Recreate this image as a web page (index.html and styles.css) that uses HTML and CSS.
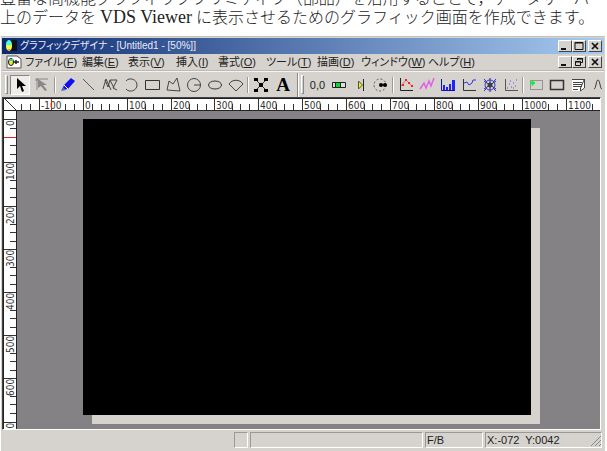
FILE: index.html
```html
<!DOCTYPE html>
<html lang="ja">
<head>
<meta charset="utf-8">
<title>グラフィックデザイナ</title>
<link rel="stylesheet" href="styles.css">
</head>
<body>
<div class="intro">
<p>豊富な高機能グラフィックプリミティブ（部品）を活用することで，データサーバ</p>
<p>上のデータを <span class="latin">VDS Viewer</span> に表示させるためのグラフィック画面を作成できます。</p>
</div>
<main class="window">
<header class="titlebar">
<svg class="app-icon" width="14" height="14" viewBox="0 0 14 14"><path fill="#111" d="M6 1h7v11H6z"/><ellipse cx="5" cy="7" rx="3" ry="5" fill="#ff3"/><path fill="#4fe" d="M2 6a3 5 0 0 1 6 0z"/><path fill="#f84" d="M3 10h4l-2 2z"/></svg>
<h1>グラフィックデザイナ - [Untitled1 - [50%]]</h1>
<div class="controls">
<button aria-label="最小化"><svg width="12" height="10"><path d="M2 8h5" stroke-width="2"/></svg></button><button aria-label="最大化"><svg width="12" height="10"><path d="M2 1.500h8v7h-8zM2 2h8"/></svg></button><button class="close" aria-label="閉じる"><svg width="12" height="10"><path d="M3 2l6 6M9 2l-6 6" stroke-width="1.700"/></svg></button>
</div>
</header>
<nav class="menubar">
<svg class="doc-icon" width="16" height="16" viewBox="0 0 16 16"><path d="M1 2h10l4 3v9H1z" fill="#fff" stroke="#555"/><ellipse cx="5" cy="8" rx="2.500" ry="3.500" fill="#ee3" stroke="#111"/><path d="M3 7h4V5H4z" fill="#3cc"/><path d="M7 8h6M10 6v4" stroke="#222" stroke-width="1.500" fill="none"/></svg>
<div class="menus">
<button>ファイル(<u>F</u>)</button><button>編集(<u>E</u>)</button><button>表示(<u>V</u>)</button><button>挿入(<u>I</u>)</button><button>書式(<u>O</u>)</button><button>ツール(<u>T</u>)</button><button>描画(<u>D</u>)</button><button>ウィンドウ(<u>W</u>)</button><button>ヘルプ(<u>H</u>)</button>
</div>
<div class="controls">
<button aria-label="文書を最小化"><svg width="12" height="10"><path d="M2 8h5" stroke-width="2"/></svg></button><button aria-label="元に戻す"><svg width="12" height="10"><path d="M4.500 3V1.500h5v4H8M4 2h6M2.500 4.500h5v4h-5zM2 5h6"/></svg></button><button class="close" aria-label="文書を閉じる"><svg width="12" height="10"><path d="M3 2l6 6M9 2l-6 6" stroke-width="1.700"/></svg></button>
</div>
</nav>
<div class="toolbar">
<i class="grip"></i>
<div class="tools">
<button class="pressed" aria-label="選択"><svg viewBox="0 0 20 20"><path d="M7 3v11l3-3 2 6 2-1-2-5h4z" fill="#000"/></svg></button>
<button class="wide" aria-label="頂点編集"><svg viewBox="0 0 20 20"><path d="M4 4h12M5 3v12M3 5h4" stroke="#888"/><path d="M6 4v9l3-2 4 5 2-1-4-5h4z" fill="#888"/></svg></button>
<i class="sep"></i>
<button aria-label="ペン"><svg viewBox="0 0 20 20"><path d="M4 15l2-5 7-7 4 3-7 8z" fill="#1111f0"/><path d="M3 16l2-4 3 3z" fill="#46c"/><path d="M6 10l4 4" stroke="#fff"/></svg></button>
<button aria-label="直線"><svg viewBox="0 0 20 20"><path d="M4 4l11 11" stroke="#555"/></svg></button>
<button aria-label="折れ線"><svg viewBox="0 0 20 20"><path d="M3 14L6 4l5 11M5 5l3 7 2-7h7l-4 8 4 2M10 5l4 8" stroke="#444"/></svg></button>
<button aria-label="円弧"><svg viewBox="0 0 20 20"><path d="M5 6c3-4 11-2 11 4s-8 8-11 4" stroke="#444"/></svg></button>
<button aria-label="長方形"><svg viewBox="0 0 20 20"><path d="M3.500 5.500h14v9h-14z" stroke="#333"/></svg></button>
<button aria-label="多角形"><svg viewBox="0 0 20 20"><path d="M4 15L6 6l4 3 4-6 3 13z" stroke="#444"/></svg></button>
<button aria-label="扇形"><svg viewBox="0 0 20 20"><circle cx="10" cy="10" r="6.500" stroke="#444"/><path d="M10 10h7" stroke="#444"/></svg></button>
<button aria-label="楕円"><svg viewBox="0 0 20 20"><ellipse cx="10" cy="10" rx="6.500" ry="4" stroke="#333"/></svg></button>
<button aria-label="弓形"><svg viewBox="0 0 20 20"><path d="M3 9c3-5 11-5 14 0l-7 7z" stroke="#444"/></svg></button>
<i class="sep"></i>
<button aria-label="部品"><svg viewBox="0 0 20 20"><path d="M4 4l12 12M16 4L4 16" stroke="#333"/><path d="M3 3h4v3H3zM13 3h4v3h-4zM8 8h4v4H8zM3 14h4v3H3zM13 14h4v3h-4z" fill="#000"/></svg></button>
<button class="letter">A</button>
</div>
<i class="edge"></i><i class="grip second"></i>
<div class="tools data">
<button class="digits">0,0</button>
<button aria-label="バー"><svg viewBox="0 0 20 20"><path d="M3.500 7.500h13v5h-13z" stroke="#222" fill="#ddd"/><path d="M7 8h4v4H7z" fill="#0d3"/><path d="M6.500 8v4M11.500 8v4" stroke="#222"/></svg></button>
<button aria-label="スライダ"><svg viewBox="0 0 20 20"><path d="M8.500 6v8l4-4z" fill="#ee2" stroke="#553"/><path d="M13.500 4v12" stroke="#222"/></svg></button>
<button aria-label="回転"><svg viewBox="0 0 20 20"><circle cx="9" cy="10" r="6" stroke="#555" stroke-dasharray="2 2"/><path d="M9 10h6" stroke="#000"/><circle cx="10" cy="10" r="2" fill="#000"/><circle cx="14" cy="10" r="2" fill="#000"/></svg></button>
<i class="sep"></i>
<button aria-label="折れ線グラフ"><svg viewBox="0 0 20 20"><path d="M4.500 3v12.500H17" stroke="#222"/><path d="M5 11l5-6 6 6" stroke="#e66"/><path d="M6 9h2v2H6zM9 4h2v2H9zM12 7h2v2h-2zM15 10h2v2h-2z" fill="#e22"/></svg></button>
<button aria-label="トレンド"><svg viewBox="0 0 20 20"><path d="M3 14l4-6 2 5 3-7 2 5 3-8" stroke="#e45de8" stroke-width="1.500"/></svg></button>
<button aria-label="棒グラフ"><svg viewBox="0 0 20 20"><path d="M3.500 4v11.500H17" stroke="#11a"/><path d="M5 10h2v5H5zM8 12h2v3H8zM11 9h2v6h-2zM14 5h3v10h-3z" fill="#22f"/></svg></button>
<button aria-label="階段グラフ"><svg viewBox="0 0 20 20"><path d="M4.500 4v11.500H17" stroke="#333"/><path d="M5 8l3-1 2 3 3-2 1-3h3" stroke="#33e"/></svg></button>
<button aria-label="レーダー"><svg viewBox="0 0 20 20"><path d="M10 3v14M4 6l12 8M4 14l12-8" stroke="#334"/><path d="M4 4l3 3M16 4l-3 3M4 16l3-3M16 16l-3-3" stroke="#33e"/><circle cx="10" cy="10" r="5" stroke="#33e"/><circle cx="10" cy="10" r="2" stroke="#223"/></svg></button>
<button aria-label="散布図"><svg viewBox="0 0 20 20"><path d="M4.500 4v11.500H17" stroke="#555"/><path d="M6 13h1M8 9h1M10 12h1M12 8h1M14 11h1M9 6h1M15 5h1M12 13h1" stroke="#55d"/></svg></button>
<i class="sep"></i>
<button aria-label="領域"><svg viewBox="0 0 20 20"><path d="M4.500 5.500h12v9h-12z" stroke="#555" stroke-dasharray="1 1"/><path d="M4 8h5M6.500 5.500v5" stroke="#1e4" stroke-width="2"/></svg></button>
<button aria-label="枠"><svg viewBox="0 0 20 20"><path d="M3.500 5.500h13v9h-13z" stroke="#333" stroke-width="1.500"/></svg></button>
<button aria-label="リスト"><svg viewBox="0 0 20 20"><path d="M4 4h13v9l-3 3H4z" fill="#fff"/><path d="M4 4.500h13M5 7.500h9M5 9.500h9M5 11.500h9M5 14.500h5M16.500 4v9l-4 3v-3z" stroke="#444"/></svg></button>
<button aria-label="曲線"><svg viewBox="0 0 20 20"><path d="M5 14c2 0 2-9 4-9s2 9 4 9" stroke="#333"/></svg></button>
</div>
</div>
<section class="workspace">
<svg class="ruler-x" height="13" role="img" aria-label="水平ルーラー">
<defs><path id="tx" d="M.500 0v12M9.500 5v6M18.500 5v6M26.500 5v6M35.500 5v6"/><path id="ty" d="M0 .500h12M6 9.500h6M6 18.500h6M6 26.500h6M6 35.500h6"/></defs>
<path d="M1 0l12 12M17.500 5v6M26.500 5v6" class="tick"/>
<g class="tick"><use href="#tx" x="35"/><use href="#tx" x="79"/><use href="#tx" x="123"/><use href="#tx" x="167"/><use href="#tx" x="210"/><use href="#tx" x="254"/><use href="#tx" x="298"/><use href="#tx" x="342"/><use href="#tx" x="386"/><use href="#tx" x="430"/><use href="#tx" x="474"/><use href="#tx" x="518"/><use href="#tx" x="562"/></g>
<path class="mask" d="M36 0h22v11H36zM80 0h6v11h-6zM124 0h17v11h-17zM168 0h17v11h-17zM211 0h17v11h-17zM255 0h17v11h-17zM299 0h17v11h-17zM343 0h17v11h-17zM387 0h17v11h-17zM431 0h17v11h-17zM475 0h17v11h-17zM519 0h24v11h-24zM563 0h24v11h-24z"/>
<text x="37" y="10">-100</text><text x="81" y="10">0</text><text x="125" y="10">100</text><text x="169" y="10">200</text><text x="212" y="10">300</text><text x="256" y="10">400</text><text x="300" y="10">500</text><text x="344" y="10">600</text><text x="388" y="10">700</text><text x="432" y="10">800</text><text x="476" y="10">900</text><text x="520" y="10">1000</text><text x="564" y="10">1100</text>
<path d="M47.500 0v12" stroke="#d22"/>
</svg>
<svg class="ruler-y" width="14" role="img" aria-label="垂直ルーラー">
<g class="tick"><use href="#ty" y="8"/><use href="#ty" y="51"/><use href="#ty" y="95"/><use href="#ty" y="138"/><use href="#ty" y="181"/><use href="#ty" y="224"/><use href="#ty" y="267"/><use href="#ty" y="311"/></g>
<path class="mask" d="M0 9h11v6H0zM0 52h12v17H0zM0 96h12v17H0zM0 139h12v17H0zM0 182h12v17H0zM0 225h12v17H0zM0 268h12v17H0zM0 312h12v17H0z"/>
<g><text transform="translate(10 15)rotate(-90)">0</text><text transform="translate(10 69)rotate(-90)">100</text><text transform="translate(10 113)rotate(-90)">200</text><text transform="translate(10 156)rotate(-90)">300</text><text transform="translate(10 199)rotate(-90)">400</text><text transform="translate(10 242)rotate(-90)">500</text><text transform="translate(10 285)rotate(-90)">600</text><text transform="translate(10 329)rotate(-90)">700</text></g>
<path d="M0 26.500h12" stroke="#d22"/>
</svg>
<div class="desk"><div class="sheet"></div></div>
</section>
<footer class="status">
<span></span><span></span><span></span><span>F/B</span><span>X:-072&nbsp; Y:0042</span>
<svg class="resize" width="12" height="12"><path d="M1 11L11 1M5 11l6-6M9 11l2-2" stroke="#888" fill="none"/></svg>
</footer>
</main>
</body>
</html>
```
FILE: styles.css
```css
* { box-sizing: border-box; }
body {
  margin: 0;
  height: 100vh;
  display: flex;
  flex-direction: column;
  overflow: hidden;
  background: #fff;
  color: #222;
  font-family: "Liberation Sans", "Noto Sans CJK JP", sans-serif;
}
button {
  padding: 0;
  border: 0;
  background: none;
  color: inherit;
  font: inherit;
  white-space: nowrap;
}
.intro {
  flex: none;
  height: 36px;
  padding: 0 8px 9px 0;
  display: flex;
  flex-direction: column;
  justify-content: flex-end;
  overflow: hidden;
  font-family: "Liberation Serif", "Noto Sans CJK JP", serif;
  font-size: 16px;
  font-weight: 300;
  line-height: 19px;
}
.intro p { margin: 0; flex: none; height: 19px; white-space: nowrap; }
.latin { font-size: 18px; line-height: 19px; }
.window {
  flex: 1;
  min-height: 0;
  margin: 0 2px 0 1px;
  padding: 1px;
  display: flex;
  flex-direction: column;
  background: #d6d3ce;
  border-top: 1px solid #c4c1bc;
}
.titlebar {
  flex: none;
  height: 16px;
  display: flex;
  align-items: center;
  padding: 0 2px;
  background: linear-gradient(to right, #0c2a72, #a6caf0);
  color: #e8ecf6;
}
.app-icon { margin-right: 2px; }
h1 {
  flex: 1;
  margin: 0;
  font-size: 10px;
  line-height: 16px;
  font-weight: 400;
  font-feature-settings: "palt";
  white-space: nowrap;
}
.controls { display: flex; }
.controls button {
  width: 14px;
  height: 12px;
  display: flex;
  background: #d6d3ce;
  border: 1px solid;
  border-color: #fff #444 #444 #fff;
}
.controls .close { margin-left: 2px; }
.controls svg { fill: none; stroke: #111; }
.menubar {
  flex: none;
  height: 17px;
  display: flex;
  align-items: center;
  padding: 0 2px;
  border-bottom: 1px solid #bbb8b3;
  font-size: 11px;
  line-height: 16px;
}
.doc-icon { margin: 0 3px 0 2px; }
.menus {
  flex: 1;
  display: grid;
  grid-template-columns: 57px 46px 48px 42px 48px 51px 44px 67px 1fr;
  justify-items: start;
  font-feature-settings: "palt";
}
.toolbar {
  flex: none;
  height: 26px;
  display: flex;
  align-items: center;
  overflow: hidden;
  border-top: 1px solid #f6f4f0;
}
.tools { display: flex; align-items: center; margin-left: 2px; }
.tools button { flex: none; width: 21px; height: 20px; display: flex; justify-content: center; align-items: center; }
.tools .wide { width: 23px; }
.tools .pressed { width: 20px; background: #efedea; border: 1px solid; border-color: #888 #fff #fff #888; }
.tools svg { flex: none; width: 20px; height: 20px; fill: none; }
.tools .letter { font: bold 19px/20px "Liberation Serif", serif; width: 24px; color: #000; }
.tools .digits { font-size: 11px; }
.data { margin-left: 3px; }
.grip { flex: none; width: 3px; height: 19px; margin-left: 3px; border: 1px solid; border-color: #fff #888 #888 #fff; }
.second { margin-left: 2px; }
.sep { flex: none; width: 2px; height: 16px; margin: 0 1px; border-left: 1px solid #999; border-right: 1px solid #fff; }
.edge { flex: none; width: 2px; height: 24px; margin-left: 2px; border-left: 1px solid #888; border-right: 1px solid #fff; }
.workspace {
  flex: 1;
  min-height: 0;
  margin: 0 3px 0 0;
  display: grid;
  grid-template: 13px minmax(0, 1fr) / 14px minmax(0, 1fr);
  border: 1px solid #444;
  border-right-color: #fff;
  border-bottom-color: #fff;
  overflow: hidden;
  background: #848284;
}
.ruler-x { grid-column: 1 / 3; width: 100%; background: #fff; border-bottom: 1px solid #222; border-top: 1px solid #222; border-left: 1px solid #222; }
.ruler-y { height: 100%; background: #fff; border-left: 1px solid #222; border-right: 1px solid #222; }
.tick { stroke: #333; fill: none; }
.mask { fill: #fff; }
.workspace text { font-family: "Liberation Sans Narrow", "DejaVu Sans Condensed", "Liberation Sans", sans-serif; font-size: 10px; fill: #333; }
.desk { padding: 8px 69px 14px 66px; display: flex; }
.sheet { flex: 1; background: #000; box-shadow: 9px 9px 0 #d6d3ce; }
.status {
  flex: none;
  height: 20px;
  padding: 2px 2px 2px 0;
  display: grid;
  grid-template-columns: minmax(0, 1fr) 14px 173px 58px 117px;
  gap: 2px;
  position: relative;
  font-size: 11px;
  line-height: 14px;
}
.status span { border: 1px solid; border-color: #999 #fff #fff #999; padding-left: 1px; white-space: nowrap; }
.status span:first-child { border-color: transparent; }
.resize { position: absolute; right: 2px; bottom: 3px; }
```
